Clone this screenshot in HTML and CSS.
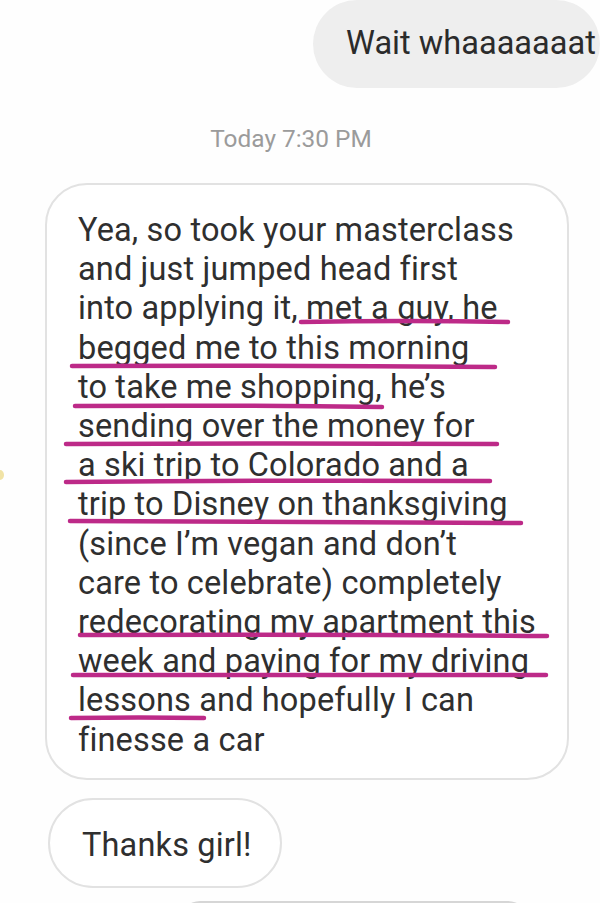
FILE: index.html
```html
<!DOCTYPE html>
<html>
<head>
<meta charset="utf-8">
<link rel="stylesheet" href="styles.css">
</head>
<body>
<div class="chat">
  <div class="row row-out">
    <div class="bubble-out">Wait whaaaaaaat</div>
  </div>
  <div class="stamp">Today 7:30 PM</div>
  <div class="bubble-in big">
    <p class="msg">Yea, so took your masterclass<br>and just jumped head first<br>into applying it, met a guy, he<br>begged me to this morning<br>to take me shopping, he’s<br>sending over the money for<br>a ski trip to Colorado and a<br>trip to Disney on thanksgiving<br>(since I’m vegan and don’t<br>care to celebrate) completely<br>redecorating my apartment this<br>week and paying for my driving<br>lessons and hopefully I can<br>finesse a car</p>
    <svg class="marks" width="523" height="597" viewBox="0 0 523 597">
      <g fill="none" stroke="#bd2a88" stroke-width="4.5" stroke-linecap="round">
        <path d="M256 139 Q360 137 463 139"/>
        <path d="M27 183 Q240 182 450 184"/>
        <path d="M30 223 Q180 222 337 224"/>
        <path d="M21 261 Q240 260 452 261"/>
        <path d="M21 299 Q230 297 445 298"/>
        <path d="M25 338 Q250 338 476 340"/>
        <path d="M35 452 Q270 451 502 453"/>
        <path d="M28 492 Q260 491 501 492"/>
        <path d="M26 535 Q95 534 159 535"/>
      </g>
    </svg>
  </div>
  <div class="bubble-in small">
    <p class="msg">Thanks girl!</p>
  </div>
  <div class="row row-out">
    <div class="bubble-next"></div>
  </div>
</div>
<div class="edge-mark"></div>
</body>
</html>
```

FILE: styles.css
```css
* { box-sizing: border-box; }
html, body {
  margin: 0;
  padding: 0;
  background: #fefefe;
}
body {
  width: 600px;
  height: 903px;
  overflow: hidden;
  position: relative;
  font-family: Roboto, "Liberation Sans", sans-serif;
  color: #2f2f2f;
}
.chat {
  display: flex;
  flex-direction: column;
}
.row {
  display: flex;
}
.row-out {
  justify-content: flex-start;
}
.bubble-out {
  margin-left: 313px;
  width: 320px;
  height: 88px;
  background: #eeeeee;
  border-radius: 44px;
  font-size: 32.6px;
  line-height: 40px;
  padding: 23px 0 0 33px;
  white-space: nowrap;
  color: #2b2b2b;
}
.stamp {
  margin-top: 37px;
  padding-right: 18px;
  text-align: center;
  font-size: 24.4px;
  line-height: 28px;
  color: #9b9b9b;
}
.bubble-in {
  position: relative;
  background: #ffffff;
  border: 2px solid #e2e2e2;
  border-radius: 42px;
}
.big {
  margin-top: 30px;
  margin-left: 45px;
  width: 524px;
  height: 597px;
  padding: 26px 0 0 31px;
}
.msg {
  margin: 0;
  font-size: 32.5px;
  line-height: 39.2px;
  letter-spacing: 0.15px;
  white-space: nowrap;
  color: #2f2f2f;
}
.marks {
  position: absolute;
  left: -2px;
  top: -2px;
}
.small {
  margin-top: 18px;
  margin-left: 48px;
  width: 234px;
  height: 90px;
  border-radius: 45px;
  padding: 26px 0 0 32px;
}
.bubble-next {
  margin-top: 13px;
  margin-left: 180px;
  width: 348px;
  height: 30px;
  background: #f2f2f2;
  border-top: 2px solid #d6d6d6;
  border-radius: 20px 20px 0 0;
}
.edge-mark {
  position: absolute;
  left: -4px;
  top: 470px;
  width: 8px;
  height: 10px;
  background: #f1e3a6;
  border-radius: 50%;
}
```
